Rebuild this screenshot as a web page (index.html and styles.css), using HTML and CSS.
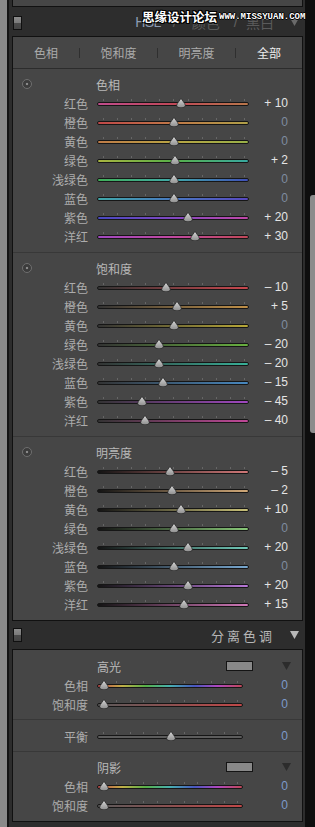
FILE: index.html
```html
<!DOCTYPE html>
<html lang="zh-CN">
<head>
<meta charset="utf-8">
<link rel="stylesheet" href="styles.css">
</head>
<body>
<svg class="defs" width="0" height="0">
  <defs>
    <linearGradient id="thg" x1="0" y1="0" x2="0" y2="1">
      <stop offset="0" stop-color="#d6d6d6"/>
      <stop offset="1" stop-color="#8e8e8e"/>
    </linearGradient>
    <symbol id="th" viewBox="0 0 10 10">
      <path d="M5 0.4 L8.7 5.6 Q10 7.8 8.6 9 Q7.2 9.8 5 9.8 Q2.8 9.8 1.4 9 Q0 7.8 1.3 5.6 Z" fill="url(#thg)" stroke="#232323" stroke-width="0.7"/>
    </symbol>
  </defs>
</svg>
<div class="app">
  <div class="edge-left"></div>
  <div class="edge-line"></div>
  <div class="main">
    <div class="stub"></div>

    <div class="hdr hdr-hsl">
      <span class="toggle"></span>
      <div class="crumbs">
        <span class="c-hsl">HSL</span>
        <span class="c-slash s1">/</span>
        <span class="c-dim c-col">颜色</span>
        <span class="c-slash s2">/</span>
        <span class="c-dim c-bw">黑白</span>
        <svg class="tri tri-hdr" width="9" height="8" viewBox="0 0 9 8"><polygon points="0,0 9,0 4.5,8"/></svg>
      </div>
      <span class="wm-cn">思缘设计论坛</span>
      <span class="wm-en">WWW.MISSYUAN.COM</span>
    </div>

    <div class="panel">
      <div class="tabs">
        <span class="tab t1">色相</span><span class="tsep"></span>
        <span class="tab t2">饱和度</span><span class="tsep"></span>
        <span class="tab t3">明亮度</span><span class="tsep"></span>
        <span class="tab t4 active">全部</span>
      </div>

      <div class="sec">
        <div class="row title"><span class="lab"><span class="target"></span></span><span class="ttl">色相</span></div>
        <div class="row"><span class="lab">红色</span><div class="sl"><div class="trk h-red"></div><div class="ticks"></div><svg class="th" style="--v:10"><use href="#th"/></svg></div><span class="val">+ 10</span></div>
        <div class="row"><span class="lab">橙色</span><div class="sl"><div class="trk h-orange"></div><div class="ticks"></div><svg class="th" style="--v:0"><use href="#th"/></svg></div><span class="val zero">0</span></div>
        <div class="row"><span class="lab">黄色</span><div class="sl"><div class="trk h-yellow"></div><div class="ticks"></div><svg class="th" style="--v:0"><use href="#th"/></svg></div><span class="val zero">0</span></div>
        <div class="row"><span class="lab">绿色</span><div class="sl"><div class="trk h-green"></div><div class="ticks"></div><svg class="th" style="--v:2"><use href="#th"/></svg></div><span class="val">+ 2</span></div>
        <div class="row"><span class="lab">浅绿色</span><div class="sl"><div class="trk h-aqua"></div><div class="ticks"></div><svg class="th" style="--v:0"><use href="#th"/></svg></div><span class="val zero">0</span></div>
        <div class="row"><span class="lab">蓝色</span><div class="sl"><div class="trk h-blue"></div><div class="ticks"></div><svg class="th" style="--v:0"><use href="#th"/></svg></div><span class="val zero">0</span></div>
        <div class="row"><span class="lab">紫色</span><div class="sl"><div class="trk h-purple"></div><div class="ticks"></div><svg class="th" style="--v:20"><use href="#th"/></svg></div><span class="val">+ 20</span></div>
        <div class="row"><span class="lab">洋红</span><div class="sl"><div class="trk h-magenta"></div><div class="ticks"></div><svg class="th" style="--v:30"><use href="#th"/></svg></div><span class="val">+ 30</span></div>
      </div>

      <div class="sec">
        <div class="row title"><span class="lab"><span class="target"></span></span><span class="ttl">饱和度</span></div>
        <div class="row"><span class="lab">红色</span><div class="sl"><div class="trk s-red"></div><div class="ticks"></div><svg class="th" style="--v:-10"><use href="#th"/></svg></div><span class="val">– 10</span></div>
        <div class="row"><span class="lab">橙色</span><div class="sl"><div class="trk s-orange"></div><div class="ticks"></div><svg class="th" style="--v:5"><use href="#th"/></svg></div><span class="val">+ 5</span></div>
        <div class="row"><span class="lab">黄色</span><div class="sl"><div class="trk s-yellow"></div><div class="ticks"></div><svg class="th" style="--v:0"><use href="#th"/></svg></div><span class="val zero">0</span></div>
        <div class="row"><span class="lab">绿色</span><div class="sl"><div class="trk s-green"></div><div class="ticks"></div><svg class="th" style="--v:-20"><use href="#th"/></svg></div><span class="val">– 20</span></div>
        <div class="row"><span class="lab">浅绿色</span><div class="sl"><div class="trk s-aqua"></div><div class="ticks"></div><svg class="th" style="--v:-20"><use href="#th"/></svg></div><span class="val">– 20</span></div>
        <div class="row"><span class="lab">蓝色</span><div class="sl"><div class="trk s-blue"></div><div class="ticks"></div><svg class="th" style="--v:-15"><use href="#th"/></svg></div><span class="val">– 15</span></div>
        <div class="row"><span class="lab">紫色</span><div class="sl"><div class="trk s-purple"></div><div class="ticks"></div><svg class="th" style="--v:-45"><use href="#th"/></svg></div><span class="val">– 45</span></div>
        <div class="row"><span class="lab">洋红</span><div class="sl"><div class="trk s-magenta"></div><div class="ticks"></div><svg class="th" style="--v:-40"><use href="#th"/></svg></div><span class="val">– 40</span></div>
      </div>

      <div class="sec">
        <div class="row title"><span class="lab"><span class="target"></span></span><span class="ttl">明亮度</span></div>
        <div class="row"><span class="lab">红色</span><div class="sl"><div class="trk l-red"></div><div class="ticks"></div><svg class="th" style="--v:-5"><use href="#th"/></svg></div><span class="val">– 5</span></div>
        <div class="row"><span class="lab">橙色</span><div class="sl"><div class="trk l-orange"></div><div class="ticks"></div><svg class="th" style="--v:-2"><use href="#th"/></svg></div><span class="val">– 2</span></div>
        <div class="row"><span class="lab">黄色</span><div class="sl"><div class="trk l-yellow"></div><div class="ticks"></div><svg class="th" style="--v:10"><use href="#th"/></svg></div><span class="val">+ 10</span></div>
        <div class="row"><span class="lab">绿色</span><div class="sl"><div class="trk l-green"></div><div class="ticks"></div><svg class="th" style="--v:0"><use href="#th"/></svg></div><span class="val zero">0</span></div>
        <div class="row"><span class="lab">浅绿色</span><div class="sl"><div class="trk l-aqua"></div><div class="ticks"></div><svg class="th" style="--v:20"><use href="#th"/></svg></div><span class="val">+ 20</span></div>
        <div class="row"><span class="lab">蓝色</span><div class="sl"><div class="trk l-blue"></div><div class="ticks"></div><svg class="th" style="--v:0"><use href="#th"/></svg></div><span class="val zero">0</span></div>
        <div class="row"><span class="lab">紫色</span><div class="sl"><div class="trk l-purple"></div><div class="ticks"></div><svg class="th" style="--v:20"><use href="#th"/></svg></div><span class="val">+ 20</span></div>
        <div class="row"><span class="lab">洋红</span><div class="sl"><div class="trk l-magenta"></div><div class="ticks"></div><svg class="th" style="--v:15"><use href="#th"/></svg></div><span class="val">+ 15</span></div>
      </div>
    </div>

    <div class="hdr hdr-split">
      <span class="toggle"></span>
      <span class="split-title">分离色调</span>
      <svg class="tri tri-light" width="9" height="8" viewBox="0 0 9 8"><polygon points="0,0 9,0 4.5,8"/></svg>
    </div>

    <div class="panel split">
      <div class="sub">
        <div class="stitle"><span class="ttl">高光</span><span class="swatch"></span><svg class="tri tri-dark" width="9" height="8" viewBox="0 0 9 8"><polygon points="0,0 9,0 4.5,8"/></svg></div>
        <div class="row srow"><span class="lab">色相</span><div class="sl ssl"><div class="trk sp-hue"></div><div class="ticks sticks"></div><svg class="th sth" style="--x:7"><use href="#th"/></svg></div><span class="val zero sval">0</span></div>
        <div class="row srow"><span class="lab">饱和度</span><div class="sl ssl"><div class="trk sp-sat"></div><div class="ticks sticks"></div><svg class="th sth" style="--x:7"><use href="#th"/></svg></div><span class="val zero sval">0</span></div>
      </div>
      <div class="sub sub-bal">
        <div class="row srow"><span class="lab">平衡</span><div class="sl ssl"><div class="trk sp-bal"></div><div class="ticks sticks"></div><svg class="th sth" style="--x:74"><use href="#th"/></svg></div><span class="val zero sval">0</span></div>
      </div>
      <div class="sub sub-last">
        <div class="stitle"><span class="ttl">阴影</span><span class="swatch"></span><svg class="tri tri-dark" width="9" height="8" viewBox="0 0 9 8"><polygon points="0,0 9,0 4.5,8"/></svg></div>
        <div class="row srow"><span class="lab">色相</span><div class="sl ssl"><div class="trk sp-hue"></div><div class="ticks sticks"></div><svg class="th sth" style="--x:7"><use href="#th"/></svg></div><span class="val zero sval">0</span></div>
        <div class="row srow"><span class="lab">饱和度</span><div class="sl ssl"><div class="trk sp-sat"></div><div class="ticks sticks"></div><svg class="th sth" style="--x:7"><use href="#th"/></svg></div><span class="val zero sval">0</span></div>
      </div>
    </div>
  </div>
  <div class="edge-right"><div class="scroll-thumb"></div></div>
</div>
</body>
</html>
```

FILE: styles.css
```css
* { box-sizing: border-box; }
html, body { margin: 0; padding: 0; }
body {
  width: 315px;
  height: 827px;
  overflow: hidden;
  background: #2d2d2d;
  font-family: "Noto Sans CJK SC", "Noto Sans", sans-serif;
  font-size: 12px;
  color: #b0b0b0;
}
.defs { position: absolute; width: 0; height: 0; }

.app { display: flex; height: 827px; }
.edge-left { width: 7px; background: #8a8a8a; }
.edge-line { width: 2px; background: #141414; }
.main { width: 296px; background: #2d2d2d; display: flex; flex-direction: column; }
.edge-right { width: 10px; background: #0e0e0e; padding: 195px 0 0 5px; }
.scroll-thumb { width: 5px; height: 238px; background: #8c8c8c; border-radius: 3px 0 0 3px; }

.stub {
  height: 7px;
  margin: 0 2px 0 3px;
  background: #464646;
  border: 1px solid #111;
  border-top: none;
}

.hdr { position: relative; display: flex; align-items: center; padding: 0 6px 0 4px; }
.hdr-hsl { height: 29px; }
.hdr-split { height: 28px; }
.toggle {
  width: 9px; height: 14px;
  border: 1px solid #101010;
  background: linear-gradient(#8c8c8c 0, #7a7a7a 50%, #4c4c4c 50%, #444 100%);
}
.hdr-hsl .toggle { margin-top: 3px; }

.crumbs { margin-left: auto; display: flex; align-items: center; height: 29px; }
.c-hsl { font-family: "Liberation Sans", sans-serif; font-size: 14px; letter-spacing: -0.6px; color: #8c9cb2; margin-top: 1px; }
.c-slash { font-family: "Liberation Sans", sans-serif; font-size: 15px; color: #5e5e5e; }
.s1 { margin-left: 12px; }
.s2 { margin-left: 14px; }
.c-dim { font-size: 14px; color: #5a5a5a; }
.c-col { margin-left: 15px; }
.c-bw { margin-left: 8px; }
.tri { display: block; }
.tri-hdr { margin-left: 16px; fill: #6a6a6a; }
.tri-light { margin-left: 15px; fill: #b8b8b8; }
.tri-dark { fill: #2c2c2c; margin-left: 29px; }

.wm-cn {
  position: absolute; left: 133px; top: 0px;
  font-size: 12.5px; font-weight: 700; color: #fff;
  text-shadow: 1px 0 #000, -1px 0 #000, 0 1px #000, 0 -1px #000, 1px 1px #000, -1px -1px #000, 1px -1px #000, -1px 1px #000;
}
.wm-en {
  position: absolute; left: 210px; top: 5px;
  font-family: "Liberation Mono", monospace; font-size: 9px; font-weight: 700; color: #fff;
  text-shadow: 1px 0 #000, -1px 0 #000, 0 1px #000, 0 -1px #000;
}

.hdr-split .split-title { margin-left: auto; font-size: 13px; letter-spacing: 3px; color: #b6b6b6; }

.panel {
  margin: 0 2px 0 3px;
  background: #464646;
  border: 1px solid #111;
}

.tabs { display: flex; align-items: center; height: 32px; border-bottom: 1px solid #2c2c2c; }
.tab { text-align: center; color: #ababab; font-size: 12px; line-height: 31px; }
.t1 { width: 66px; }
.t2, .t3 { width: 77px; }
.t4 { flex: 1; }
.tab.active { color: #ececec; }
.tsep { width: 1px; height: 10px; background: #2f2f2f; }

.sec { padding: 5px 0 6px; }
.sec + .sec { border-top: 1px solid #383838; }

.row { display: flex; height: 19px; align-items: flex-start; }
.row.title { height: 20px; align-items: center; }
.lab { width: 75px; text-align: right; line-height: 19px; color: #acacac; flex: none; }
.title .lab { text-align: left; padding-left: 9px; display: flex; align-items: center; height: 20px; }
.ttl { margin-left: 8px; color: #b8b8b8; font-size: 12px; }
.target {
  width: 10px; height: 10px; border-radius: 50%;
  border: 1.5px solid #6e6e6e;
  background: radial-gradient(circle, #8a8a8a 0 1.2px, #3c3c3c 1.6px);
}

.sl { position: relative; width: 152px; height: 19px; margin-left: 9px; flex: none; }
.trk { height: 4px; margin-top: 8px; border: 1px solid #161616; border-radius: 2px; }
.ticks {
  position: absolute; left: 6px; top: 5px; width: 142px; height: 2px;
  background: repeating-linear-gradient(to right, #666 0 1px, transparent 1px 14.1px);
}
.th {
  position: absolute; top: 4px; width: 10px; height: 10px;
  left: calc(71.5px + var(--v) * 0.705px);
}
.val {
  width: 39px; text-align: right; flex: none;
  font-family: "Liberation Sans", sans-serif; font-size: 12px; line-height: 19px;
  color: #e4e4e4;
}
.val.zero { color: #7f8ca0; }

.h-red { background: linear-gradient(90deg, #c04c8c, #c04858 50%, #b8764a); }
.h-orange { background: linear-gradient(90deg, #c04848, #c07848 50%, #b0a048); }
.h-yellow { background: linear-gradient(90deg, #c07c48, #b8a444 50%, #98b048); }
.h-green { background: linear-gradient(90deg, #a8b440, #58b048 50%, #38a8a0); }
.h-aqua { background: linear-gradient(90deg, #40b058, #40a8a8 50%, #4050b8); }
.h-blue { background: linear-gradient(90deg, #40a8a8, #4878c0 50%, #5848c0); }
.h-purple { background: linear-gradient(90deg, #4848c0, #8048c0 50%, #c048a8); }
.h-magenta { background: linear-gradient(90deg, #a048c0, #c048a0 50%, #c04858); }

.s-red { background: linear-gradient(90deg, #333, #c8484e); }
.s-orange { background: linear-gradient(90deg, #333, #c09048); }
.s-yellow { background: linear-gradient(90deg, #333, #b8a838); }
.s-green { background: linear-gradient(90deg, #333, #68b040); }
.s-aqua { background: linear-gradient(90deg, #333, #38b098); }
.s-blue { background: linear-gradient(90deg, #333, #4888c0); }
.s-purple { background: linear-gradient(90deg, #333, #a048c0); }
.s-magenta { background: linear-gradient(90deg, #333, #c04898); }

.l-red { background: linear-gradient(90deg, #141414, #d07878); }
.l-orange { background: linear-gradient(90deg, #141414, #d0a878); }
.l-yellow { background: linear-gradient(90deg, #141414, #c8c078); }
.l-green { background: linear-gradient(90deg, #141414, #88c878); }
.l-aqua { background: linear-gradient(90deg, #141414, #70c8b8); }
.l-blue { background: linear-gradient(90deg, #141414, #78a8d0); }
.l-purple { background: linear-gradient(90deg, #141414, #b878d8); }
.l-magenta { background: linear-gradient(90deg, #141414, #d078b8); }

.split .sub { padding: 6px 0 5px; }
.split .sub-bal { padding: 7px 0 5px; border-top: 1px solid #383838; }
.split .sub-last { padding: 5px 0 6px; border-top: 1px solid #383838; }
.stitle { display: flex; align-items: center; height: 20px; padding-left: 84px; }
.stitle .ttl { margin-left: 0; }
.swatch { margin-left: auto; width: 27px; height: 10px; background: #888; border: 1px solid #141414; }
.stitle .tri-dark { margin-right: 11px; }
.ssl { width: 146px; }
.sticks {
  left: 6px; width: 136px;
  background: repeating-linear-gradient(to right, #666 0 1px, transparent 1px 13.44px);
}
.sth { left: calc(var(--x) * 1px - 5px); }
.sval { width: 45px; }
.split .val.zero { color: #7c9acb; }
.sp-hue { background: linear-gradient(90deg, #c04848, #c0b048 17%, #58b048 33%, #48b0b0 50%, #4858c0 67%, #b048c0 83%, #c04858); }
.sp-sat { background: linear-gradient(90deg, #5a5a5a, #c04848); }
.sp-bal { background: #5c5c5c; }
```
